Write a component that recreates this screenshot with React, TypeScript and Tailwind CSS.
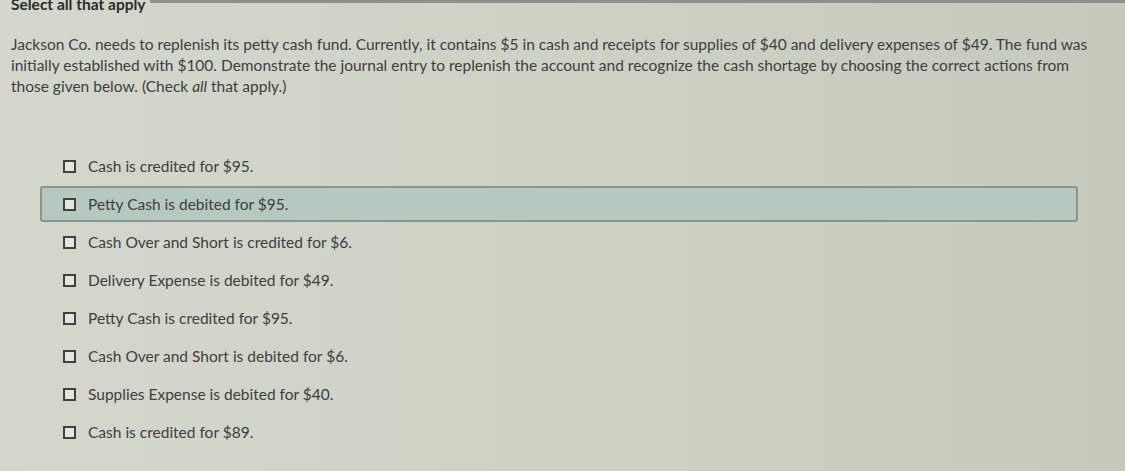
import React from 'react';

const options = [
  'Cash is credited for $95.',
  'Petty Cash is debited for $95.',
  'Cash Over and Short is credited for $6.',
  'Delivery Expense is debited for $49.',
  'Petty Cash is credited for $95.',
  'Cash Over and Short is debited for $6.',
  'Supplies Expense is debited for $40.',
  'Cash is credited for $89.',
];

export default function App() {
  return (
    <div
      className="w-[1125px] h-[471px] overflow-hidden bg-gradient-to-r from-[#d4d7cc] via-[#ced2c5] to-[#c6cabd] text-[#3d403d] relative"
      style={{ fontFamily: 'Lato, "Open Sans", sans-serif' }}
    >
      <div className="absolute top-0 left-[150px] right-0 h-[3px] bg-[#8d918b]" />
      <div className="px-[11px] -mt-[5px]">
        <h1 className="text-[15.5px] font-bold text-[#2a2c2a] leading-[19px]">Select all that apply</h1>
        <p className="mt-[20px] text-[15.5px] leading-[21px] pr-[18px]">
          Jackson Co. needs to replenish its petty cash fund. Currently, it contains $5 in cash and receipts for supplies of $40 and delivery expenses of $49. The fund was initially established with $100. Demonstrate the journal entry to replenish the account and recognize the cash shortage by choosing the correct actions from those given below. (Check <i>all</i> that apply.)
        </p>
      </div>
      <div className="mt-[51px] pl-[40px] pr-[47px] flex flex-col gap-[2px]">
        {options.map((o, i) => (
          <label
            key={o}
            className={`flex items-center gap-[12px] h-[36px] pl-[21px] rounded-[3px] border-2 ${
              i === 1 ? 'bg-[#b6c9c1] border-[#8a9590]' : 'border-transparent'
            }`}
          >
            <span className="w-[13px] h-[13px] border-2 border-[#3f423f] bg-[#e4e6de] shrink-0" />
            <span className="text-[15.5px] mt-[2px]">{o}</span>
          </label>
        ))}
      </div>
    </div>
  );
}
